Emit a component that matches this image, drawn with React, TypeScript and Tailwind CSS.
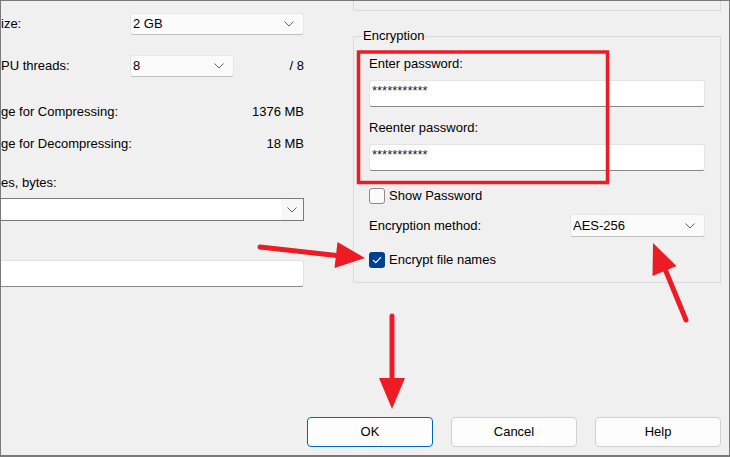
import React from 'react'

function Chevron() {
  return (
    <svg width="10" height="6" viewBox="0 0 10 6" className="shrink-0">
      <polyline points="0.5,0.5 5,5 9.5,0.5" fill="none" stroke="#5f5f5f" strokeWidth="1" />
    </svg>
  )
}

function Dropdown({ value, className }: { value: string; className: string }) {
  return (
    <div
      className={`flex items-center justify-between bg-[#fbfbfb] border border-[#e6e6e6] border-b-[#bfbfbf] rounded-[3px] pl-[2px] pr-[9px] ${className}`}
    >
      <span>{value}</span>
      <Chevron />
    </div>
  )
}

function TextInput({ value, className }: { value?: string; className: string }) {
  return (
    <div className={`bg-white border border-[#e3e3e3] border-b-[#8a8a8a] rounded-[3px] ${className}`}>
      {value && <span className="block pl-[2px] pt-[3px] text-[13px] leading-none text-[#1b1b3a]">{value}</span>}
    </div>
  )
}

function Checkbox({ checked }: { checked?: boolean }) {
  if (checked) {
    return (
      <div className="w-[16px] h-[16px] rounded-[3px] bg-[#003e92] flex items-center justify-center">
        <svg width="10" height="8" viewBox="0 0 10 8">
          <polyline points="1,4 3.8,6.6 9,1.2" fill="none" stroke="white" strokeWidth="1.2" />
        </svg>
      </div>
    )
  }
  return <div className="w-[16px] h-[16px] rounded-[3px] bg-[#fbfbfb] border border-[#8a8a8a]" />
}

function Button({ label, primary }: { label: string; primary?: boolean }) {
  return (
    <div
      className={`w-[126px] h-[30px] flex items-center justify-center rounded-[4px] bg-[#fdfdfd] border ${
        primary ? 'border-[#0067c0]' : 'border-[#d0d0d0]'
      }`}
    >
      {label}
    </div>
  )
}

function Annotations() {
  const red = '#ed1c24'
  return (
    <svg className="absolute inset-0 pointer-events-none" width="730" height="457" viewBox="0 0 730 457">
      <rect x="357.5" y="51" width="249" height="130.5" fill="none" stroke={red} strokeWidth="3.5" />
      {/* arrow to Encrypt file names */}
      <line x1="259" y1="246" x2="340" y2="255" stroke={red} strokeWidth="5" strokeLinecap="round" />
      <polygon points="336.5,241 333.5,267 364,257" fill={red} />
      {/* arrow to AES-256 */}
      <line x1="685" y1="319" x2="664" y2="268" stroke={red} strokeWidth="5" strokeLinecap="round" />
      <polygon points="652,242 651.5,275 675.5,265" fill={red} />
      {/* arrow to OK */}
      <line x1="391" y1="315" x2="391" y2="380" stroke={red} strokeWidth="5" strokeLinecap="round" />
      <polygon points="378,377 404,377 391,408" fill={red} />
    </svg>
  )
}

export default function App() {
  return (
    <div className="relative w-[730px] h-[457px] overflow-hidden bg-[#f0f0f0] border-t border-l border-r border-b-2 border-[#7a7a7a] flex flex-col text-[13px] leading-[16px] text-black font-['Liberation_Sans',Arial,sans-serif]">
      <div className="flex">
        {/* Left: compression settings (clipped) */}
        <div className="w-[303px] flex flex-col">
          <div className="mt-[12px] h-[22px] flex items-center">
            <span className="w-[129px] shrink-0">ize:</span>
            <Dropdown value="2 GB" className="w-[174px] h-[22px]" />
          </div>
          <div className="mt-[20px] h-[22px] flex items-center">
            <span className="w-[129px] shrink-0">PU threads:</span>
            <Dropdown value="8" className="w-[104px] h-[22px]" />
            <span className="flex-1 text-right">/ 8</span>
          </div>
          <div className="mt-[24px] h-[22px] flex items-center justify-between">
            <span>ge for Compressing:</span>
            <span>1376 MB</span>
          </div>
          <div className="mt-[10px] h-[22px] flex items-center justify-between">
            <span>ge for Decompressing:</span>
            <span>18 MB</span>
          </div>
          <div className="mt-[19px] h-[18px] flex items-center">
            <span>es, bytes:</span>
          </div>
          <div className="mt-[6px] h-[23px] flex bg-white border border-[#7a7a7a] border-l-0">
            <div className="flex-1" />
            <div className="w-[22px] bg-[#f7f7f7] flex items-center justify-center">
              <Chevron />
            </div>
          </div>
          <TextInput className="mt-[39px] h-[27px] border-l-0 rounded-l-none" />
        </div>

        {/* Right: encryption */}
        <div className="ml-[49px] w-[368px] flex flex-col">
          <div className="h-[10px] border border-t-0 border-[#dadada]" />
          <div className="relative mt-[25px] h-[247px] border border-[#dadada] pl-[15px] pr-[15px]">
            <span className="absolute -top-[9px] left-[8px] bg-[#f0f0f0] px-px">Encryption</span>
            <div className="mt-[19px] h-[16px]">Enter password:</div>
            <TextInput value="***********" className="mt-[8px] h-[27px]" />
            <div className="mt-[13px] h-[16px]">Reenter password:</div>
            <TextInput value="***********" className="mt-[8px] h-[27px]" />
            <div className="mt-[17px] h-[16px] flex items-center gap-[4px]">
              <Checkbox />
              <span>Show Password</span>
            </div>
            <div className="mt-[10px] h-[23px] flex items-center justify-between">
              <span>Encryption method:</span>
              <Dropdown value="AES-256" className="w-[135px] h-[23px]" />
            </div>
            <div className="mt-[15px] h-[16px] flex items-center gap-[4px]">
              <Checkbox checked />
              <span>Encrypt file names</span>
            </div>
          </div>
        </div>
      </div>

      <div className="mt-auto mb-[8px] pr-[8px] flex justify-end gap-[18px]">
        <Button label="OK" primary />
        <Button label="Cancel" />
        <Button label="Help" />
      </div>

      <Annotations />
    </div>
  )
}
